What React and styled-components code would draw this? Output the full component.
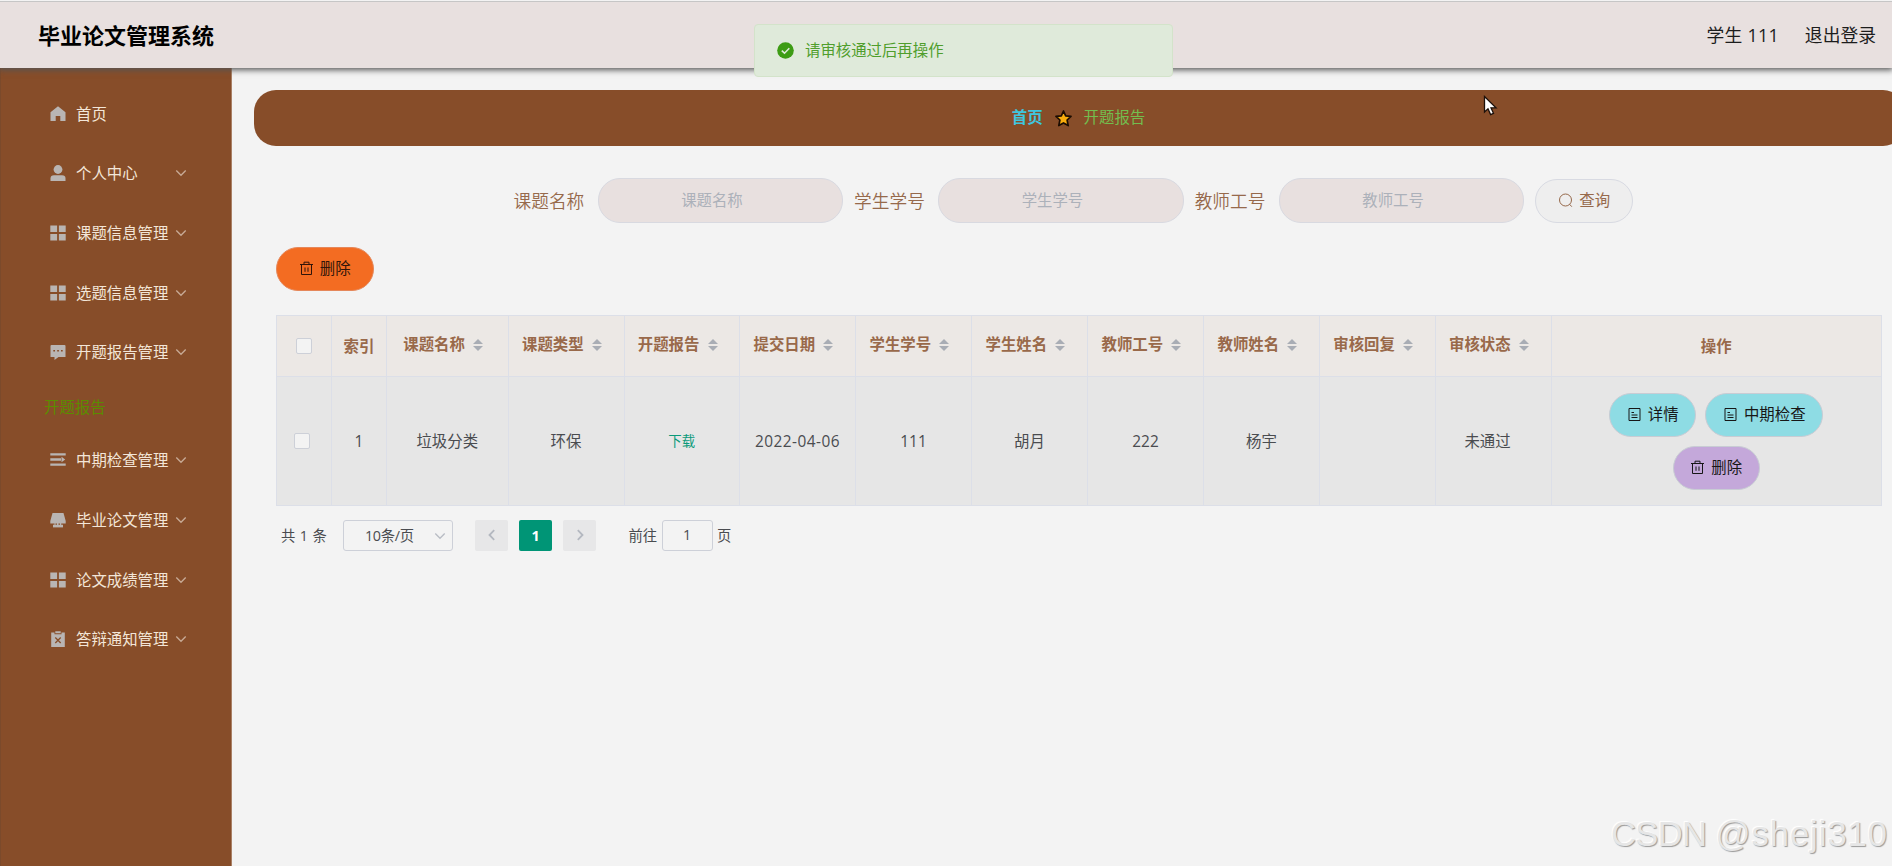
import React, { useState } from 'react';
import styled, { createGlobalStyle } from 'styled-components';

const GlobalStyle = createGlobalStyle`
  * {
    box-sizing: border-box;
  }

  body {
    margin: 0;
    overflow: hidden;
    background: #f3f3f3;
    font-family: 'Open Sans', 'Noto Sans CJK SC', sans-serif;
    font-size: 15.4px;
    color: #4a4c50;
  }

  button, input {
    font-family: inherit;
  }
`;

const Page = styled.div`
  display: flex;
  flex-direction: column;
  width: 1892px;
  height: 866px;
  overflow: hidden;
`;

const Head = styled.header`
  display: flex;
  justify-content: space-between;
  align-items: center;
  flex: none;
  height: 68px;
  padding: 0 16px 0 38px;
  background: #e8e0df;
  border-top: 1px solid #f3f3f3;
  box-shadow: inset 0 1px 0 #c6c6c6, 0 1px 6px 1px #555;
  position: relative;
  z-index: 1;
`;

const Title = styled.h1`
  margin: 0;
  font-size: 22px;
  line-height: 30px;
  font-weight: 700;
  color: #000;
`;

const UserArea = styled.div`
  display: flex;
  gap: 26px;
  font-size: 17.8px;
  line-height: 26px;
  font-weight: 400;
  color: #1c1c1c;
`;

const UserName = styled.span`
  letter-spacing: 0.3px;
`;

const Body = styled.div`
  display: flex;
  flex: 1;
  min-height: 0;
`;

const Sidebar = styled.nav`
  flex: none;
  width: 232px;
  padding-top: 17px;
  background: #874d29;
  border-left: 1px solid #7b4a2b;
  border-right: 1px solid #a98065;
`;

const MenuItem = styled.div`
  display: flex;
  align-items: center;
  height: 59.6px;
  padding-left: 48.5px;
  color: #f3e6d8;
  cursor: pointer;

  svg {
    flex: none;
    margin-bottom: 2px;
  }

  svg:first-child {
    margin-right: 10.5px;
  }
`;

const MenuText = styled.span`
  width: 99px;
  line-height: 22px;
  white-space: nowrap;
`;

const SubItem = styled.div`
  display: flex;
  align-items: center;
  height: 48.6px;
  padding: 0 0 2px 43px;
  color: #5b8c00;
`;

const Main = styled.main`
  flex: 1;
  min-width: 0;
  padding: 22px 0 0 22px;
`;

const Breadcrumb = styled.div`
  display: flex;
  justify-content: center;
  align-items: center;
  gap: 12px;
  width: 1651px;
  height: 55.5px;
  padding: 1px 2px 0 0;
  border-radius: 22px;
  background: #874d29;
`;

const Crumb = styled.span`
  line-height: 22px;
  font-weight: ${({ $home }) => ($home ? 700 : 400)};
  color: ${({ $home }) => ($home ? '#3fc5de' : '#73bd4e')};
`;

const Content = styled.section`
  padding: 33px 10px 0 22px;
`;

const SearchForm = styled.form`
  display: flex;
  align-items: center;
  margin-left: 237.5px;
  height: 44px;
`;

const Label = styled.label`
  margin-right: 13.5px;
  padding-top: 1px;
  font-size: 17.7px;
  line-height: 26px;
  font-weight: 350;
  color: #96694b;
`;

const SearchInput = styled.input`
  width: 245.3px;
  height: 44.5px;
  margin-right: 11px;
  padding: 0 17px 1px 0;
  border: 1px solid #d8d9e0;
  border-radius: 22px;
  background: #e8e0df;
  font-size: 15.4px;
  text-align: center;
  outline: none;

  &::placeholder {
    color: #acb1ba;
    opacity: 1;
  }
`;

const Button = styled.button`
  display: inline-flex;
  justify-content: center;
  align-items: center;
  gap: 6px;
  flex: none;
  width: ${({ $width }) => $width}px;
  height: 44px;
  padding: 0;
  border: 1px solid ${({ $border }) => $border || '#c8ccd4'};
  border-radius: 22px;
  background: ${({ $bg }) => $bg};
  font-size: 15.4px;
  line-height: 22px;
  color: ${({ $color }) => $color || '#171717'};
  cursor: pointer;
`;

const Toolbar = styled.div`
  display: flex;
  margin: 24px 0 24.5px;
`;

const Table = styled.div`
  width: 1606px;
  border: 1px solid #dcdfe8;
  border-bottom: 0;
  border-right: 0;
`;

const Row = styled.div`
  display: grid;
  grid-template-columns: 55px 55px 121.5px 116px 115.5px 116px 116px 116px 116px 116px 115.5px 116px 1fr;
  height: ${({ $head }) => ($head ? 61 : 129)}px;
  background: ${({ $head }) => ($head ? '#ece8e5' : '#e6e6e6')};
  color: ${({ $head }) => ($head ? '#99694a' : '#4a4c50')};
  font-weight: ${({ $head }) => ($head ? 700 : 400)};
`;

const Cell = styled.div`
  display: flex;
  justify-content: center;
  align-items: center;
  min-width: 0;
  padding-top: ${({ $sort, $check }) => ($sort || $check ? 0 : 2)}px;
  padding-bottom: ${({ $sort }) => ($sort ? 2 : 0)}px;
  padding-right: ${({ $shift }) => $shift || 0}px;
  border-right: 1px solid #dcdfe8;
  border-bottom: 1px solid #dcdfe8;
  line-height: 22px;
  white-space: nowrap;
`;

const SortIcon = styled.span`
  display: flex;
  flex-direction: column;
  align-items: center;
  gap: 2px;
  width: 26.4px;

  &::before,
  &::after {
    content: '';
    border: 5.5px solid transparent;
  }

  &::before {
    border-top: 0;
    border-bottom: 5px solid #a9adb5;
  }

  &::after {
    border-bottom: 0;
    border-top: 5px solid #a9adb5;
  }
`;

const CheckBox = styled.span`
  width: 16px;
  height: 16px;
  border: 1px solid #cdd0d8;
  border-radius: 2px;
  background: #f3f3f3;
`;

const DateText = styled.span`
  letter-spacing: 0.45px;
`;

const Download = styled.a`
  margin-top: -2px;
  font-size: 13.4px;
  color: #0b9a7a;
`;

const Actions = styled.div`
  display: flex;
  flex-wrap: wrap;
  justify-content: center;
  gap: 9px;
  width: 260px;
  margin-top: -2px;
`;

const Pagination = styled.div`
  display: flex;
  align-items: center;
  height: 31px;
  margin-top: 14px;
  padding-left: 5px;
  font-size: 14.3px;
  line-height: 20px;
`;

const Total = styled.span`
  width: 62px;
  letter-spacing: 0.4px;
`;

const PageSize = styled.div`
  display: flex;
  align-items: center;
  justify-content: space-between;
  width: 110px;
  height: 31px;
  margin-right: 22px;
  padding: 0 6px 0 21px;
  border: 1px solid #cdd0d8;
  border-radius: 3px;
  letter-spacing: -0.3px;
`;

const PageButton = styled.button`
  display: flex;
  justify-content: center;
  align-items: center;
  width: 33px;
  height: 31px;
  margin-right: 11px;
  padding: 0 0 1px;
  border: 0;
  border-radius: 2px;
  background: ${({ $active }) => ($active ? '#009576' : '#e7e7e8')};
  color: ${({ $active }) => ($active ? '#fff' : '#b4b8c0')};
  font-size: 14.3px;
  font-weight: 700;
`;

const Jumper = styled.div`
  display: flex;
  align-items: center;
  gap: 4.5px;
  margin-left: 21.5px;
`;

const PageInput = styled.input`
  width: 51px;
  height: 31px;
  padding: 0 0 2px;
  border: 1px solid #cdd0d8;
  border-radius: 3px;
  background: transparent;
  color: #4a4c50;
  font-size: 14.3px;
  text-align: center;
`;

const Message = styled.div`
  display: flex;
  align-items: center;
  gap: 11px;
  width: 419px;
  height: 53px;
  padding-left: 22.5px;
  border: 1px solid #d3e3ca;
  border-radius: 4px;
  background: #dfeada;
  color: #4f9e2c;
  line-height: 22px;
  position: absolute;
  top: 24px;
  left: 753.5px;
  z-index: 2;
`;

const Watermark = styled.div`
  font-family: 'Liberation Sans', sans-serif;
  font-size: 34.5px;
  line-height: 40px;
  letter-spacing: 1px;
  word-spacing: -1.5px;
  white-space: nowrap;
  color: #e6e6e6;
  text-shadow: 1px 1px 1px #9a9a9a, -1px -1px 1px #fff;
  position: absolute;
  top: 814px;
  left: 1611px;
`;

const WatermarkSite = styled.span`
  letter-spacing: -0.6px;
`;

const Cursor = styled.svg`
  position: absolute;
  top: 95px;
  left: 1482.5px;
  z-index: 3;
`;

const iconPaths = {
  home: 'M0.5 6.2 8 0.3 15.5 6.2V15H10.3V10H5.7V15H0.5Z',
  grid: 'M0.3 0.5H7.1V7.1H0.3ZM8.9 0.5H15.7V7.1H8.9ZM0.3 8.9H7.1V15.5H0.3ZM8.9 8.9H15.7V15.5H8.9Z',
};

function MenuIcon ({ name }) {
  return (
    <svg width="16" height="16" viewBox="0 0 16 16" fill="#b9b5b3">
      {iconPaths[name] && <path d={iconPaths[name]} />}
      {name === 'user' && (
        <>
          <circle cx="8" cy="4.5" r="4.4" />
          <path d="M0.5 16V13.5Q0.5 10.3 4 10.3H12Q15.5 10.3 15.5 13.5V16Z" />
        </>
      )}
      {name === 'chat' && (
        <>
          <path d="M1.5 1H14.5Q15.5 1 15.5 2V13H8.5L4.5 16V13H0.5V2Q0.5 1 1.5 1Z" />
          <path d="M3.3 6H5V7.5H3.3ZM7.2 6H8.9V7.5H7.2ZM11 6H12.7V7.5H11Z" fill="#874d29" />
        </>
      )}
      {name === 'fold' && (
        <path d="M0.3 1.2H15.7V3.6H0.3ZM0.3 6.3H11V8.7H0.3ZM0.3 11.4H15.7V13.8H0.3ZM11.5 4.8 15.2 7.5 11.5 10.2Z" />
      )}
      {name === 'print' && (
        <>
          <path d="M2.5 1H13.5L15.7 9V11.5H0.3V9Z" />
          <path d="M3 10.2H13V15.4H3Z" />
          <path d="M3 11.5H4.5V12.7H3ZM5.5 11.5H7V12.7H5.5ZM8.5 11.5H10V12.7H8.5ZM11.2 11.5H13V12.7H11.2Z" fill="#874d29" />
        </>
      )}
      {name === 'clip' && (
        <>
          <path d="M1.2 1.5H4.5V3.2H11.5V1.5H14.8V16H1.2ZM5.3 0.2H10.7V2.2H5.3Z" />
          <path d="M5.3 6.5 10.7 12M10.7 6.5 5.3 12" stroke="#874d29" strokeWidth="1.3" />
        </>
      )}
    </svg>
  );
}

function Chevron ({ size = 12, color = '#c8ab96', dir = 'down' }) {
  const d = {
    down: 'M1.3 3.5 6 8.3 10.7 3.5',
    left: 'M8.2 1.2 3.5 6 8.2 10.8',
    right: 'M3.8 1.2 8.5 6 3.8 10.8',
  };

  return (
    <svg width={size} height={size} viewBox="0 0 12 12" fill="none" stroke={color} strokeWidth={dir === 'down' ? 1.3 : 1.8}>
      <path d={d[dir]} />
    </svg>
  );
}

function TrashIcon () {
  return (
    <svg width="15" height="15" viewBox="0 0 15 15" fill="none" stroke="currentColor" strokeWidth="1">
      <path d="M1 3.5H14M5 3.5V1.2H10V3.5M2.5 3.5V13.5H12.5V3.5M6 6.5V10.8M9 6.5V10.8" />
    </svg>
  );
}

function DocIcon () {
  return (
    <svg width="15" height="15" viewBox="0 0 15 15" fill="none" stroke="currentColor" strokeWidth="1">
      <path d="M2 1.5H13V13.5H2ZM4.5 5.5H7M4.5 8H10.5M4.5 10.5H10.5" />
    </svg>
  );
}

const menus = [
  { icon: 'home', text: '首页', single: true },
  { icon: 'user', text: '个人中心' },
  { icon: 'grid', text: '课题信息管理' },
  { icon: 'grid', text: '选题信息管理' },
  { icon: 'chat', text: '开题报告管理', children: ['开题报告'] },
  { icon: 'fold', text: '中期检查管理' },
  { icon: 'print', text: '毕业论文管理' },
  { icon: 'grid', text: '论文成绩管理' },
  { icon: 'clip', text: '答辩通知管理' },
];

const fields = ['课题名称', '学生学号', '教师工号'];

const columns = ['课题名称', '课题类型', '开题报告', '提交日期', '学生学号', '学生姓名', '教师工号', '教师姓名', '审核回复', '审核状态'];

export default function App () {
  const [ page, setPage ] = useState('1');

  return (
    <>
      <GlobalStyle />
      <Page>
        <Head>
          <Title>毕业论文管理系统</Title>
          <UserArea>
            <UserName>学生 111</UserName>
            <span>退出登录</span>
          </UserArea>
        </Head>
        <Body>
          <Sidebar>
            {menus.map((menu) => (
              <React.Fragment key={menu.text}>
                <MenuItem>
                  <MenuIcon name={menu.icon} />
                  <MenuText>{menu.text}</MenuText>
                  {!menu.single && <Chevron />}
                </MenuItem>
                {menu.children?.map((child) => <SubItem key={child}>{child}</SubItem>)}
              </React.Fragment>
            ))}
          </Sidebar>
          <Main>
            <Breadcrumb>
              <Crumb $home>首页</Crumb>
              <svg width="17" height="17" viewBox="0 0 17 17">
                <path
                  d="M8.5 1 10.7 5.8 16 6.4 12.1 10 13.2 15.6 8.5 12.9 3.8 15.6 4.9 10 1 6.4 6.3 5.8Z"
                  fill="#f9ad0c"
                  stroke="#1c0d02"
                  strokeWidth="1.7"
                  strokeLinejoin="round"
                />
              </svg>
              <Crumb>开题报告</Crumb>
            </Breadcrumb>
            <Content>
              <SearchForm>
                {fields.map((field) => (
                  <React.Fragment key={field}>
                    <Label>{field}</Label>
                    <SearchInput placeholder={field} />
                  </React.Fragment>
                ))}
                <Button type="button" $width={98} $bg="#eee" $border="#d8dae2" $color="#96694b">
                  <svg width="15" height="15" viewBox="0 0 15 15" fill="none" stroke="currentColor">
                    <circle cx="7.5" cy="7" r="6" />
                    <path d="M11.5 11.2 13.8 13.7" />
                  </svg>
                  查询
                </Button>
              </SearchForm>
              <Toolbar>
                <Button $width={97.5} $bg="#f36c22" $border="#e5875a" $color="#30150a">
                  <TrashIcon />
                  删除
                </Button>
              </Toolbar>
              <Table>
                <Row $head>
                  <Cell $check><CheckBox /></Cell>
                  <Cell>索引</Cell>
                  {columns.map((column) => (
                    <Cell key={column} $sort>
                      {column}
                      <SortIcon />
                    </Cell>
                  ))}
                  <Cell>操作</Cell>
                </Row>
                <Row>
                  <Cell $check $shift={4}><CheckBox /></Cell>
                  <Cell>1</Cell>
                  <Cell>垃圾分类</Cell>
                  <Cell>环保</Cell>
                  <Cell><Download>下载</Download></Cell>
                  <Cell><DateText>2022-04-06</DateText></Cell>
                  <Cell>111</Cell>
                  <Cell>胡月</Cell>
                  <Cell>222</Cell>
                  <Cell>杨宇</Cell>
                  <Cell />
                  <Cell $shift={11}>未通过</Cell>
                  <Cell>
                    <Actions>
                      <Button $width={87} $bg="#8edce4"><DocIcon />详情</Button>
                      <Button $width={118} $bg="#8edce4"><DocIcon />中期检查</Button>
                      <Button $width={87} $bg="#c4a8da"><TrashIcon />删除</Button>
                    </Actions>
                  </Cell>
                </Row>
              </Table>
              <Pagination>
                <Total>共 1 条</Total>
                <PageSize>
                  10条/页
                  <Chevron color="#b8bcc4" />
                </PageSize>
                <PageButton><Chevron dir="left" color="#b4b8c0" /></PageButton>
                <PageButton $active>1</PageButton>
                <PageButton><Chevron dir="right" color="#b4b8c0" /></PageButton>
                <Jumper>
                  前往
                  <PageInput value={page} onChange={(e) => setPage(e.target.value)} />
                  页
                </Jumper>
              </Pagination>
            </Content>
          </Main>
        </Body>
      </Page>
      <Message>
        <svg width="17" height="17" viewBox="0 0 17 17">
          <circle cx="8.5" cy="8.5" r="8.3" fill="#3d9c14" />
          <path d="M4.8 8.6 7.5 11.2 12.3 6.3" fill="none" stroke="#dfeada" strokeWidth="1.6" />
        </svg>
        请审核通过后再操作
      </Message>
      <Cursor width="15" height="22" viewBox="0 0 15 22">
        <path
          d="M1.5 1.5V17L5 13.8 7.6 19.6 10.5 18.3 8 12.8H13Z"
          fill="#fff"
          stroke="#1c100a"
          strokeWidth="1.3"
        />
      </Cursor>
      <Watermark><WatermarkSite>CSDN</WatermarkSite> @sheji310</Watermark>
    </>
  );
}
